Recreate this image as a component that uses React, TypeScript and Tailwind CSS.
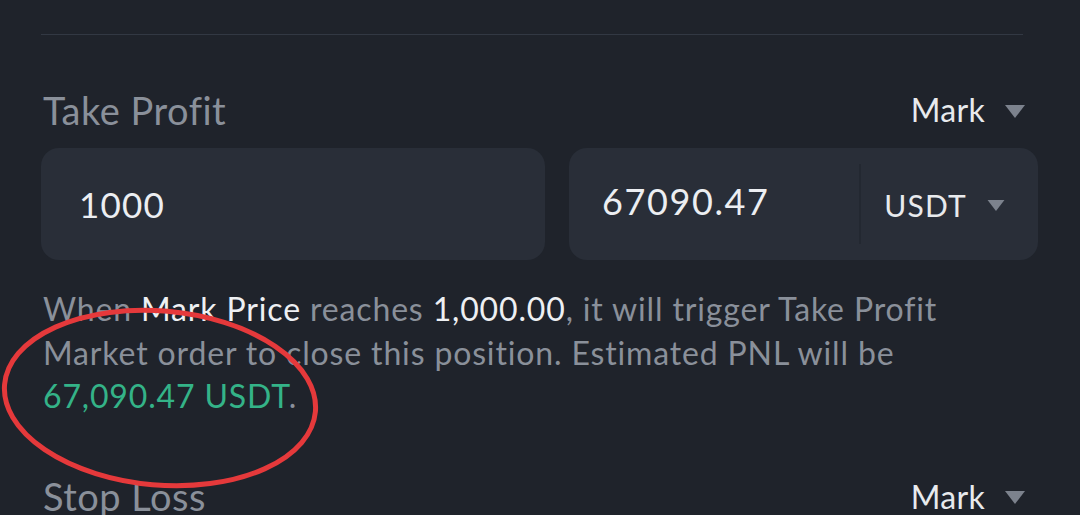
import React from 'react';

const font = { fontFamily: 'Lato, "Noto Sans", sans-serif' };

function Caret({ className = '' }: { className?: string }) {
  return (
    <svg viewBox="0 0 20 13" className={className} fill="#7c828d">
      <path d="M0 0h20L10 13z" />
    </svg>
  );
}

function Header({ title }: { title: string }) {
  return (
    <div className="flex h-[60px] items-center justify-between pr-[13px]">
      <span className="pl-[2px] text-[38px] tracking-[0.5px] text-[#8a909a]">{title}</span>
      <div className="flex items-center gap-[20px]">
        <span className="text-[32px] tracking-[0.3px] text-[#e8eaed]">Mark</span>
        <Caret className="mt-[2px] h-[13px] w-[20px]" />
      </div>
    </div>
  );
}

export default function App() {
  return (
    <div className="relative h-[515px] w-[1080px] overflow-hidden bg-[#1f232b] pl-[41px] pr-[42px]" style={font}>
      <div className="mr-[15px] mt-[34px] h-px bg-[#323843]" />

      <div className="mt-[45px]">
        <Header title="Take Profit" />
      </div>

      <div className="mt-[8px] flex h-[112px] gap-[24px]">
        <div className="flex w-[504px] items-center rounded-[18px] bg-[#292e38] pl-[38px]">
          <span className="text-[35px] tracking-[1.2px] text-[#eceef2]">1000</span>
        </div>
        <div className="flex flex-1 items-center rounded-[18px] bg-[#292e38]">
          <span className="mb-[6px] flex-1 pl-[33px] text-[36px] tracking-[1.6px] text-[#eceef2]">67090.47</span>
          <div className="h-[80px] w-[2px] bg-[#232831]" />
          <div className="flex items-center gap-[20px] pl-[23px] pr-[33px]">
            <span className="mt-[2px] text-[30px] tracking-[1.2px] text-[#e8eaed]">USDT</span>
            <Caret className="mt-[2px] h-[11px] w-[18px]" />
          </div>
        </div>
      </div>

      <p className="mt-[27px] pl-[2px] text-[32px] leading-[43.5px] tracking-[0.85px] text-[#8a909a]">
        When <span className="text-[#eef0f3]">Mark Price</span> reaches{' '}
        <span className="text-[#eef0f3]">1,000.00</span>, it will trigger Take Profit
        <br />
        Market order to close this position. Estimated PNL will be
        <br />
        <span className="text-[#34b388]">67,090.47 USDT</span>.
      </p>

      <div className="mt-[49px]">
        <Header title="Stop Loss" />
      </div>

      <svg className="pointer-events-none absolute left-0 top-0" width="1080" height="515">
        <ellipse
          cx="160"
          cy="398"
          rx="156"
          ry="87"
          transform="rotate(5 160 398)"
          fill="none"
          stroke="#e5393b"
          strokeWidth="5"
        />
      </svg>
    </div>
  );
}
